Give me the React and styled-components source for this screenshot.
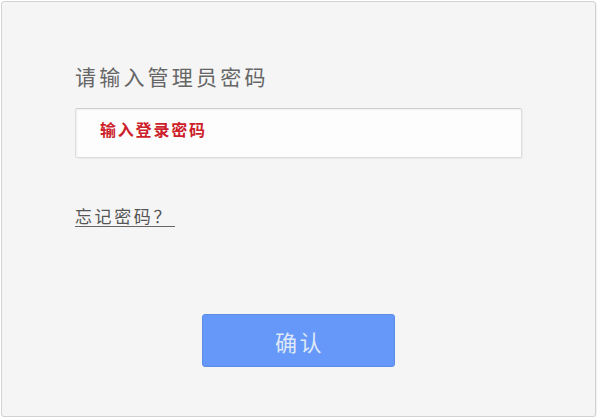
import React from "react";
import styled, { createGlobalStyle } from "styled-components";

const GlobalStyle = createGlobalStyle`
  html, body {
    margin: 0;
    padding: 0;
    background: #ffffff;
  }
  body {
    font-family: "Noto Sans CJK SC", "Noto Sans", sans-serif;
  }
`;

const Panel = styled.div`
  box-sizing: border-box;
  margin: 1px 0 0 1px;
  width: 595px;
  height: 416px;
  border: 1px solid #d2d2d2;
  border-radius: 3px;
  background: #f5f5f5;
  box-shadow: 1px 1px 1px rgba(0, 0, 0, 0.06);
  display: flex;
  flex-direction: column;
`;

const Form = styled.div`
  display: flex;
  flex-direction: column;
  align-items: flex-start;
  padding: 62px 0 0 73px;
`;

const Title = styled.div`
  font-size: 21px;
  line-height: 24px;
  letter-spacing: 3.2px;
  color: #666666;
`;

const Field = styled.div`
  box-sizing: border-box;
  margin-top: 20px;
  width: 447px;
  height: 50px;
  padding: 10px 24px 0;
  background: #fdfdfd;
  border: 1px solid #dcdcdc;
  border-top-color: #cfcfcf;
  border-radius: 2px;
  box-shadow: inset 1px 1px 2px rgba(0, 0, 0, 0.06), 1px 1px 1px rgba(0, 0, 0, 0.04);
`;

const Placeholder = styled.span`
  display: block;
  font-size: 16px;
  line-height: 20px;
  font-weight: bold;
  letter-spacing: 1.8px;
  color: #cc1f2b;
`;

const Forget = styled.a`
  display: inline-block;
  margin-top: 48px;
  font-size: 17px;
  line-height: 20px;
  letter-spacing: 2.6px;
  color: #555555;
  text-decoration: none;
  border-bottom: 1px solid #666666;
  padding-right: 2px;
  cursor: pointer;
`;

const Actions = styled.div`
  display: flex;
  justify-content: center;
  margin-top: 87px;
`;

const Button = styled.button`
  box-sizing: border-box;
  width: 193px;
  height: 53px;
  border: 1px solid #5c8ce8;
  border-radius: 3px;
  background: #6598f8;
  color: #dfe8f9;
  font-family: "Noto Sans CJK SC", "Noto Sans", sans-serif;
  font-size: 22px;
  letter-spacing: 2.5px;
  padding: 0 0 0 2px;
  cursor: pointer;
`;

export default function App() {
  return (
    <>
      <GlobalStyle />
      <Panel>
        <Form>
          <Title>请输入管理员密码</Title>
          <Field>
            <Placeholder>输入登录密码</Placeholder>
          </Field>
          <Forget>忘记密码？</Forget>
        </Form>
        <Actions>
          <Button>确认</Button>
        </Actions>
      </Panel>
    </>
  );
}
